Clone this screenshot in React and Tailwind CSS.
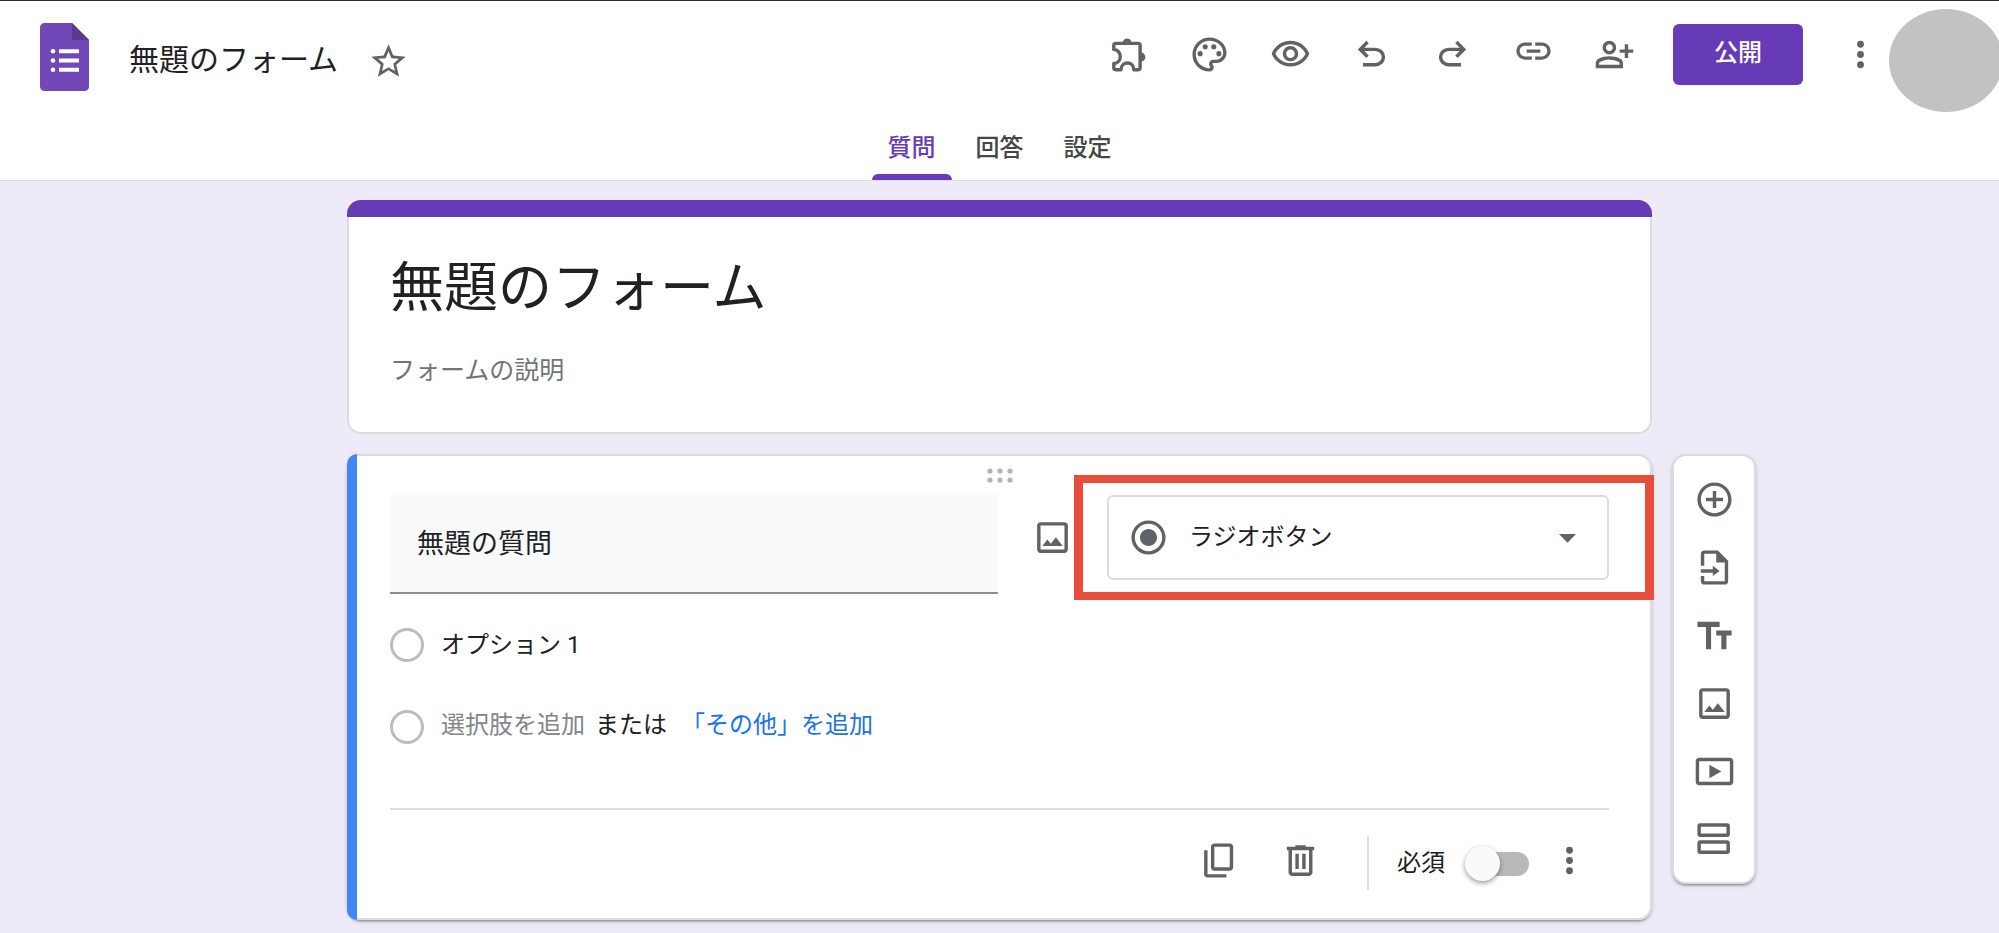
import { useState } from 'react';

// All icons share the same 24 unit grid
function Icon({ children }) {
  return (
    <svg viewBox="0 0 24 24" className="size-[41px] shrink-0" fill="currentColor" aria-hidden="true">
      {children}
    </svg>
  );
}

const ImageIcon = () => (
  <Icon>
    <path d="M19 5v14H5V5h14m0-2H5c-1.1 0-2 .9-2 2v14c0 1.1.9 2 2 2h14c1.1 0 2-.9 2-2V5c0-1.1-.9-2-2-2z" />
    <path d="M6 17l3-3.8 2 2.5 3-3.9L18 17z" />
  </Icon>
);

const MoreIcon = () => (
  <Icon>
    <circle cx="12" cy="6" r="2" />
    <circle cx="12" cy="12" r="2" />
    <circle cx="12" cy="18" r="2" />
  </Icon>
);

const headerActions = [
  {
    label: 'アドオン',
    icon: (
      <Icon>
        <path
          d="M3.4 9V6.6c0-.7.4-1.1 1.1-1.1h13.2c.7 0 1.1.4 1.1 1.1v13.2c0 .7-.4 1.1-1.1 1.1h-2.6c0-2.3-1.6-3.9-3.7-3.9s-3.8 1.6-3.8 3.9H4.5c-.7 0-1.1-.4-1.1-1.1v-2.5c2.2-.1 3.8-1.900 3.800-4.100S5.600 9.100 3.400 9z"
          fill="none"
          stroke="currentColor"
          strokeWidth="2"
          strokeLinejoin="round"
        />
        <path d="M8.6 5.2a2.6 2.6 0 0 1 5.2 0zM19.3 10.9a2.6 2.6 0 0 1 0 5.2z" />
      </Icon>
    ),
  },
  {
    label: 'テーマをカスタマイズ',
    icon: (
      <Icon>
        <path d="M12 22C6.49 22 2 17.51 2 12S6.49 2 12 2s10 4.04 10 9c0 3.31-2.69 6-6 6h-1.77c-.28 0-.5.22-.5.5 0 .12.05.23.13.33.41.47.64 1.06.64 1.67A2.5 2.5 0 0 1 12 22zm0-18c-4.41 0-8 3.59-8 8s3.59 8 8 8c.28 0 .5-.22.5-.5a.54.54 0 0 0-.14-.35c-.41-.46-.63-1.05-.63-1.65a2.5 2.5 0 0 1 2.5-2.5H16c2.21 0 4-1.79 4-4 0-3.86-3.59-7-8-7z" />
        <circle cx="6.5" cy="11.5" r="1.5" />
        <circle cx="9.5" cy="7.5" r="1.5" />
        <circle cx="14.5" cy="7.5" r="1.5" />
        <circle cx="17.5" cy="11.5" r="1.5" />
      </Icon>
    ),
  },
  {
    label: 'プレビュー',
    icon: (
      <Icon>
        <path d="M12 4C7 4 2.73 7.11 1 11.5 2.73 15.89 7 19 12 19s9.27-3.11 11-7.5C21.27 7.11 17 4 12 4zm0 13c-3.79 0-7.17-2.13-8.82-5.5C4.83 8.13 8.21 6 12 6s7.17 2.13 8.82 5.5C19.17 14.87 15.79 17 12 17zm0-10c-2.48 0-4.5 2.02-4.5 4.5S9.52 16 12 16s4.5-2.02 4.5-4.5S14.48 7 12 7zm0 7c-1.38 0-2.5-1.12-2.5-2.5S10.62 9 12 9s2.5 1.12 2.5 2.5S13.38 14 12 14z" />
      </Icon>
    ),
  },
  {
    label: '元に戻す',
    icon: (
      <Icon>
        <path d="M7 19v-2h7.1q1.575 0 2.738-1T18 13.5 16.838 11 14.1 10H7.8l2.6 2.6L9 14 4 9l5-5 1.4 1.4L7.8 8h6.3q2.425 0 4.163 1.575T20 13.5t-1.737 3.925T14.1 19z" />
      </Icon>
    ),
  },
  {
    label: 'やり直す',
    icon: (
      <Icon>
        <path d="M17 19v-2H9.9q-1.575 0-2.738-1T6 13.5 7.162 11 9.9 10h6.3l-2.6 2.6L15 14l5-5-5-5-1.4 1.4L16.2 8H9.9q-2.425 0-4.163 1.575T4 13.5t1.737 3.925T9.9 19z" />
      </Icon>
    ),
  },
  {
    label: 'リンクをコピー',
    icon: (
      <Icon>
        <path d="M3.9 10c0-1.71 1.39-3.1 3.1-3.1h4V5H7c-2.76 0-5 2.24-5 5s2.24 5 5 5h4v-1.9H7c-1.71 0-3.1-1.39-3.1-3.1zM8 11h8V9H8v2zm9-6h-4v1.9h4c1.71 0 3.1 1.39 3.1 3.1s-1.39 3.1-3.1 3.1h-4V15h4c2.76 0 5-2.24 5-5s-2.24-5-5-5z" />
      </Icon>
    ),
  },
  {
    label: '共同編集者を追加',
    icon: (
      <Icon>
        <path d="M18 14v-3h-3V9h3V6h2v3h3v2h-3v3zm-9-2q-1.65 0-2.825-1.175T5 8t1.175-2.825T9 4t2.825 1.175T13 8t-1.175 2.825T9 12m-8 8v-2.8q0-.85.438-1.562T2.6 14.55q1.55-.775 3.15-1.162T9 13t3.25.388 3.15 1.162q.725.375 1.163 1.088T17 17.2V20zm2-2h12v-.8q0-.275-.137-.5t-.363-.35q-1.35-.675-2.725-1.012T9 15t-2.775.338T3.5 16.35q-.225.125-.363.35T3 17.2zm6-8q.825 0 1.413-.587T11 8t-.587-1.412T9 6t-1.412.588T7 8t.588 1.413T9 10" />
      </Icon>
    ),
  },
];

const toolbarActions = [
  {
    label: '質問を追加',
    icon: (
      <Icon>
        <path d="M13 7h-2v4H7v2h4v4h2v-4h4v-2h-4V7zm-1-5C6.48 2 2 6.48 2 12s4.48 10 10 10 10-4.48 10-10S17.52 2 12 2zm0 18c-4.41 0-8-3.59-8-8s3.59-8 8-8 8 3.59 8 8-3.59 8-8 8z" />
      </Icon>
    ),
  },
  {
    label: '質問をインポート',
    icon: (
      <Icon>
        <path d="M14 2H6c-1.1 0-2 .9-2 2v7h2V4h7v5h5v11H6v-3H4v3c0 1.1.9 2 2 2h12c1.1 0 2-.9 2-2V8l-6-6z" />
        <path d="M4 13h7v-2l4 3-4 3v-2H4z" />
      </Icon>
    ),
  },
  {
    label: 'タイトルと説明を追加',
    icon: (
      <Icon>
        <path d="M2 4v3h5v13h3V7h5V4zM13 9v3h3v8h3v-8h3V9z" />
      </Icon>
    ),
  },
  { label: '画像を追加', icon: <ImageIcon /> },
  {
    label: '動画を追加',
    icon: (
      <Icon>
        <path d="M21 4H3c-1.1 0-2 .9-2 2v12c0 1.1.9 2 2 2h18c1.1 0 2-.9 2-2V6c0-1.1-.9-2-2-2zm0 14H3V6h18z" />
        <path d="M9 8v8l7-4z" />
      </Icon>
    ),
  },
  {
    label: 'セクションを追加',
    icon: (
      <Icon>
        <path d="M19.5 2.5h-16C2.7 2.5 2 3.2 2 4v5c0 .8.7 1.5 1.5 1.5h16c.8 0 1.5-.7 1.5-1.5V4c0-.8-.7-1.5-1.5-1.5zM19 8.5H4v-4h15zM19.5 12.5h-16c-.8 0-1.5.7-1.5 1.5v5c0 .8.7 1.5 1.5 1.5h16c.8 0 1.5-.7 1.5-1.5v-5c0-.8-.7-1.5-1.5-1.5zM19 18.5H4v-4h15z" />
      </Icon>
    ),
  },
];

const tabs = ['質問', '回答', '設定'];

function Header({ title, setTitle }) {
  const [activeTab, setActiveTab] = useState('質問');

  return (
    <header className="overflow-hidden border-t border-b border-t-[#2b2a2e] border-b-[#dadce0] bg-white">
      <div className="flex h-[118px] items-center justify-between pl-10">
        {/* Logo and title */}
        <div className="flex items-center gap-10">
          <a href="#" aria-label="フォーム ホーム" className="pb-1.5">
            <svg viewBox="0 0 49 68" className="h-[68px] w-[49px]" aria-hidden="true">
              <path d="M4.5 0H32l17 17v46.5a4.5 4.5 0 0 1-4.5 4.5h-40A4.5 4.5 0 0 1 0 63.5v-59A4.5 4.5 0 0 1 4.5 0z" fill="#7248b9" />
              <path d="M32 0v17h17z" fill="#583a8e" />
              <g fill="#fff">
                <circle cx="13" cy="28.3" r="2.3" />
                <circle cx="13" cy="37.5" r="2.3" />
                <circle cx="13" cy="46.8" r="2.3" />
                <path d="M19 26.3h20v4H19zM19 35.5h20v4H19zM19 44.8h20v4H19z" />
              </g>
            </svg>
          </a>
          <div className="flex items-center gap-[30px]">
            <input
              aria-label="ドキュメント名"
              value={title}
              onChange={(e) => setTitle(e.target.value)}
              className="field-sizing-content text-[30px] leading-10 text-[#202124] outline-none"
            />
            <button aria-label="スターを付ける" className="text-[#5f6368]">
              <Icon>
                <path d="M22 9.74l-7.19-.62L12 2.5 9.19 9.13 2 9.74l5.46 4.73L5.82 21.5 12 17.77l6.18 3.73-1.63-7.03L22 9.74zM12 15.9l-3.76 2.27 1-4.28-3.32-2.88 4.38-.38L12 6.6l1.71 4.04 4.38.38-3.32 2.88 1 4.28L12 15.9z" />
              </Icon>
            </button>
          </div>
        </div>

        {/* Actions */}
        <div className="flex items-center">
          <div className="flex items-center pb-3">
            {headerActions.map(({ label, icon }) => (
              <button key={label} aria-label={label} className="flex w-[81px] justify-center text-[#5f6368]">
                {icon}
              </button>
            ))}
            <button className="ml-[18px] h-[61px] w-[130px] rounded-md bg-[#673ab7] pb-0.5 text-2xl font-medium text-white">
              公開
            </button>
            <button aria-label="その他" className="ml-7 flex w-[58px] justify-center text-[#5f6368]">
              <MoreIcon />
            </button>
          </div>
          <div className="-mr-1 h-[103px] w-[114px] rounded-[50%] bg-[#c2c2c2]" />
        </div>
      </div>

      {/* Tabs */}
      <nav className="flex h-[61px] justify-center gap-2 pt-0.5">
        {tabs.map((tab) => (
          <button
            key={tab}
            onClick={() => setActiveTab(tab)}
            className={`flex flex-col text-2xl font-medium ${activeTab === tab ? 'text-[#673ab7]' : 'text-[#444746]'}`}
          >
            <span className="flex flex-1 items-center px-4">{tab}</span>
            <span className={`h-1.5 w-full rounded-t-md ${activeTab === tab ? 'bg-[#673ab7]' : ''}`} />
          </button>
        ))}
      </nav>
    </header>
  );
}

function TitleCard({ title, setTitle }) {
  return (
    <section className="col-start-2 overflow-hidden rounded-[14px]">
      <div className="h-[17px] bg-[#673ab7]" />
      <div className="flex flex-col rounded-b-[14px] border-x-2 border-b-2 border-[#dadce0] bg-white px-[41px] pt-10 pb-[45px]">
        <input
          aria-label="フォームのタイトル"
          value={title}
          onChange={(e) => setTitle(e.target.value)}
          className="h-16 w-full text-[54px] leading-[64px] text-[#202124] outline-none"
        />
        <input
          aria-label="フォームの説明"
          placeholder="フォームの説明"
          className="mt-[34px] h-8 w-full text-[25px] text-[#202124] outline-none placeholder:text-[#70757a]"
        />
      </div>
    </section>
  );
}

function QuestionCard() {
  const [question, setQuestion] = useState('無題の質問');
  const [option, setOption] = useState('オプション 1');
  const [required, setRequired] = useState(false);

  return (
    <section className="col-start-2 flex rounded-[14px] bg-white shadow-[0_3px_2px_-2px_rgba(0,0,0,0.2),0_2px_2px_rgba(0,0,0,0.14),0_2px_5px_rgba(0,0,0,0.12)]">
      <div className="w-[10px] shrink-0 rounded-l-[10px] bg-[#4285f4]" />
      <div className="min-w-0 flex-1 rounded-r-[14px] border-y-2 border-r-2 border-[#dadce0] pr-[41px] pl-[33px]">
        {/* Drag handle */}
        <div className="flex h-[39px] items-center justify-center">
          <svg viewBox="0 0 26 15" className="h-[15px] w-[26px]" fill="#b5b5b5" aria-hidden="true">
            {[3, 13, 23].map((x) => (
              <g key={x}>
                <circle cx={x} cy="3" r="2.6" />
                <circle cx={x} cy="12" r="2.6" />
              </g>
            ))}
          </svg>
        </div>

        {/* Question and type */}
        <div className="flex items-start">
          <input
            aria-label="質問"
            value={question}
            onChange={(e) => setQuestion(e.target.value)}
            className="h-[99px] min-w-0 flex-1 border-b-2 border-[#8b8e93] bg-[#f8f9fa] px-[27px] pb-1 text-[27px] text-[#202124] outline-none"
          />
          <button aria-label="画像を追加" className="flex h-[85px] w-[109px] items-center justify-center text-[#5f6368]">
            <ImageIcon />
          </button>
          <div className="relative w-[502px]">
            <select
              aria-label="質問の種類"
              className="h-[85px] w-full appearance-none rounded-md border-2 border-[#dadce0] bg-white pr-16 pb-0.5 pl-20 text-2xl text-[#202124] outline-none"
            >
              <option>ラジオボタン</option>
            </select>
            <div className="pointer-events-none absolute inset-0 flex items-center justify-between px-[21px] text-[#5f6368]">
              <Icon>
                <path d="M12 7c-2.76 0-5 2.24-5 5s2.24 5 5 5 5-2.24 5-5-2.24-5-5-5zm0-5C6.48 2 2 6.48 2 12s4.48 10 10 10 10-4.48 10-10S17.52 2 12 2zm0 18c-4.42 0-8-3.58-8-8s3.58-8 8-8 8 3.58 8 8-3.58 8-8 8z" />
              </Icon>
              <Icon>
                <path d="M7 10l5 5 5-5z" />
              </Icon>
            </div>
            {/* Highlight */}
            <div className="pointer-events-none absolute -inset-y-5 -right-[45px] -left-[33px] border-x-[9px] border-y-8 border-[#ea4c3b]" />
          </div>
        </div>

        {/* Options */}
        <div className="mt-2.5 text-2xl text-[#202124]">
          <div className="flex h-[82px] items-center gap-[17px]">
            <span className="size-[34px] shrink-0 rounded-full border-[3px] border-[#bdbdbd]" />
            <input
              aria-label="選択肢の値"
              value={option}
              onChange={(e) => setOption(e.target.value)}
              className="flex-1 outline-none"
            />
          </div>
          <div className="flex h-[82px] items-center gap-[17px]">
            <span className="size-[34px] shrink-0 rounded-full border-[3px] border-[#bdbdbd]" />
            <div className="flex pb-1">
              <button className="text-[#80868b]">選択肢を追加</button>
              <span className="ml-2.5">または</span>
              <button className="ml-3.5 text-[#1a73e8]">「その他」を追加</button>
            </div>
          </div>
        </div>

        {/* Footer */}
        <div className="mt-10 flex h-[110px] items-center justify-end border-t-2 border-[#dadce0] pb-2 text-[#5f6368]">
          <button aria-label="コピーを作成" className="flex w-[81px] justify-center">
            <Icon>
              <path d="M9 18q-.825 0-1.412-.587T7 16V4q0-.825.588-1.412T9 2h9q.825 0 1.413.588T20 4v12q0 .825-.587 1.413T18 18zm0-2h9V4H9zm-4 6q-.825 0-1.412-.587T3 20V6h2v14h11v2z" />
            </Icon>
          </button>
          <button aria-label="削除" className="flex w-[81px] justify-center">
            <Icon>
              <path d="M7 21q-.825 0-1.412-.587T5 19V6H4V4h5V3h6v1h5v2h-1v13q0 .825-.587 1.413T17 21zM17 6H7v13h10zM9 17h2V8H9zm4 0h2V8h-2z" />
            </Icon>
          </button>
          <div className="ml-[26px] flex items-center pt-1.5">
            <div className="mr-7 h-[54px] border-l-2 border-[#dadce0]" />
            <label htmlFor="required" className="text-2xl text-[#202124]">
              必須
            </label>
            <input
              id="required"
              type="checkbox"
              checked={required}
              onChange={(e) => setRequired(e.target.checked)}
              className="relative ml-5 h-[35px] w-16 appearance-none before:absolute before:top-1.5 before:right-0 before:left-1.5 before:h-6 before:rounded-full before:bg-[#b9b9b9] after:absolute after:left-0 after:size-[35px] after:rounded-full after:bg-[#fafafa] after:shadow-[0_2px_5px_rgba(0,0,0,0.4)] checked:before:bg-[#b39ddb] checked:after:left-7 checked:after:bg-[#673ab7]"
            />
          </div>
          <button aria-label="その他のオプション" className="flex w-20 justify-center">
            <MoreIcon />
          </button>
        </div>
      </div>
    </section>
  );
}

function Toolbar() {
  return (
    <aside className="ml-5 flex w-[84px] flex-col self-start rounded-[14px] border-2 border-[#dadce0] bg-white py-[9px] shadow-[0_3px_2px_-2px_rgba(0,0,0,0.2),0_2px_2px_rgba(0,0,0,0.14),0_2px_5px_rgba(0,0,0,0.12)]">
      {toolbarActions.map(({ label, icon }) => (
        <button key={label} aria-label={label} className="flex h-[68px] items-center justify-center text-[#5f6368]">
          {icon}
        </button>
      ))}
    </aside>
  );
}

export default function App() {
  const [title, setTitle] = useState('無題のフォーム');

  return (
    <div className="min-h-screen bg-[#eeeaf8] font-[Roboto,'Noto_Sans_CJK_JP',sans-serif]" lang="ja">
      <Header title={title} setTitle={setTitle} />
      <main className="grid grid-cols-[1fr_minmax(0,1305px)_1fr] gap-y-5 pt-[19px] pb-3">
        <TitleCard title={title} setTitle={setTitle} />
        <QuestionCard />
        <Toolbar />
      </main>
    </div>
  );
}
